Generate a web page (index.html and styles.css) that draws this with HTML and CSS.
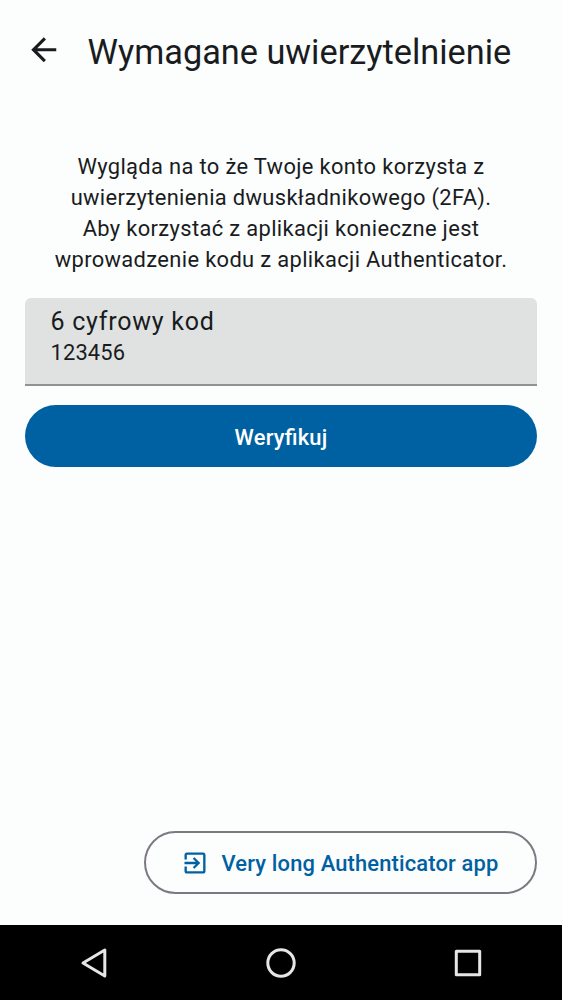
FILE: index.html
```html
<!DOCTYPE html>
<html lang="pl">
<head>
<meta charset="utf-8">
<title>Wymagane uwierzytelnienie</title>
<link rel="stylesheet" href="styles.css">
</head>
<body>
<div class="screen">
  <header class="top-bar">
    <svg class="back" viewBox="0 0 24 24"><path d="M20 11H7.83l5.59-5.59L12 4l-8 8 8 8 1.41-1.41L7.83 13H20v-2z"/></svg>
    <h1 class="title">Wymagane uwierzytelnienie</h1>
  </header>
  <main class="content">
    <p class="intro">Wygląda na to że Twoje konto korzysta z<br>uwierzytenienia dwuskładnikowego (2FA).<br>Aby korzystać z aplikacji konieczne jest<br>wprowadzenie kodu z aplikacji Authenticator.</p>
    <div class="field">
      <span class="label">6 cyfrowy kod</span>
      <span class="value">123456</span>
    </div>
    <button class="verify">Weryfikuj</button>
    <button class="app-link">
      <svg class="exit" viewBox="0 0 24 24"><path d="M10.09 15.59L11.5 17l5-5-5-5-1.41 1.41L12.67 11H3v2h9.67l-2.58 2.59zM19 3H5c-1.11 0-2 .9-2 2v4h2V5h14v14H5v-4H3v4c0 1.1.89 2 2 2h14c1.1 0 2-.9 2-2V5c0-1.1-.9-2-2-2z"/></svg>
      <span class="app-name">Very long Authenticator app</span>
    </button>
  </main>
  <nav class="nav-bar">
    <svg class="nav-icon" viewBox="0 0 36 36"><path d="M28.800 5v26L7 18z"/></svg>
    <svg class="nav-icon" viewBox="0 0 36 36"><circle cx="18" cy="18" r="13.200"/></svg>
    <svg class="nav-icon" viewBox="0 0 36 36"><path d="M6.300 6.300h23.400v23.400H6.300z"/></svg>
  </nav>
</div>
</body>
</html>
```
FILE: styles.css
```css
* { box-sizing: border-box; }
body { margin: 0; font-family: Roboto, sans-serif; color: #191c1e; background: #fcfdfd; }
.screen { height: 1000px; display: flex; flex-direction: column; }
.top-bar { height: 100px; display: flex; align-items: center; padding-left: 25px; gap: 25px; }
.back { width: 37.5px; height: 37.5px; fill: #191c1e; }
.title { margin: 0; font-size: 34.3px; font-weight: 400; white-space: nowrap; padding-top: 4px; }
.content { flex: 1; display: flex; flex-direction: column; padding: 51px 25px 31px; }
.intro { margin: 0 0 23px; text-align: center; font-size: 21.9px; line-height: 31px; letter-spacing: .35px; white-space: nowrap; }
.field { height: 88px; background: #e0e2e1; border-bottom: 2px solid #919392; border-radius: 6px 6px 0 0; padding: 8px 25.5px; display: flex; flex-direction: column; }
.label { font-size: 25px; line-height: 31px; letter-spacing: .74px; }
.value { font-size: 21.9px; line-height: 31px; letter-spacing: .15px; }
.verify, .app-link { font: 500 21.9px Roboto, sans-serif; letter-spacing: .16px; }
.verify { height: 62px; border-radius: 31px; margin-top: 19px; border: 0; color: #fff; background: #0061a2; padding-top: 4px; letter-spacing: .2px; font-feature-settings: "liga" 1; }
.app-link { height: 63px; border-radius: 31.5px; margin-top: auto; align-self: flex-end; width: 393px; border: 2px solid #7d7982; background: transparent; color: #0061a2; display: flex; align-items: center; justify-content: center; gap: 13px; padding: 0 7px 0 5px; white-space: nowrap; }
.app-name { padding-top: 2px; }
.exit { width: 28px; height: 28px; fill: #0061a2; }
.nav-bar { height: 75px; background: #000; display: flex; justify-content: space-around; align-items: center; }
.nav-icon { width: 36px; height: 36px; fill: none; stroke: #e6e6e6; stroke-width: 3px; stroke-linejoin: round; }
```
